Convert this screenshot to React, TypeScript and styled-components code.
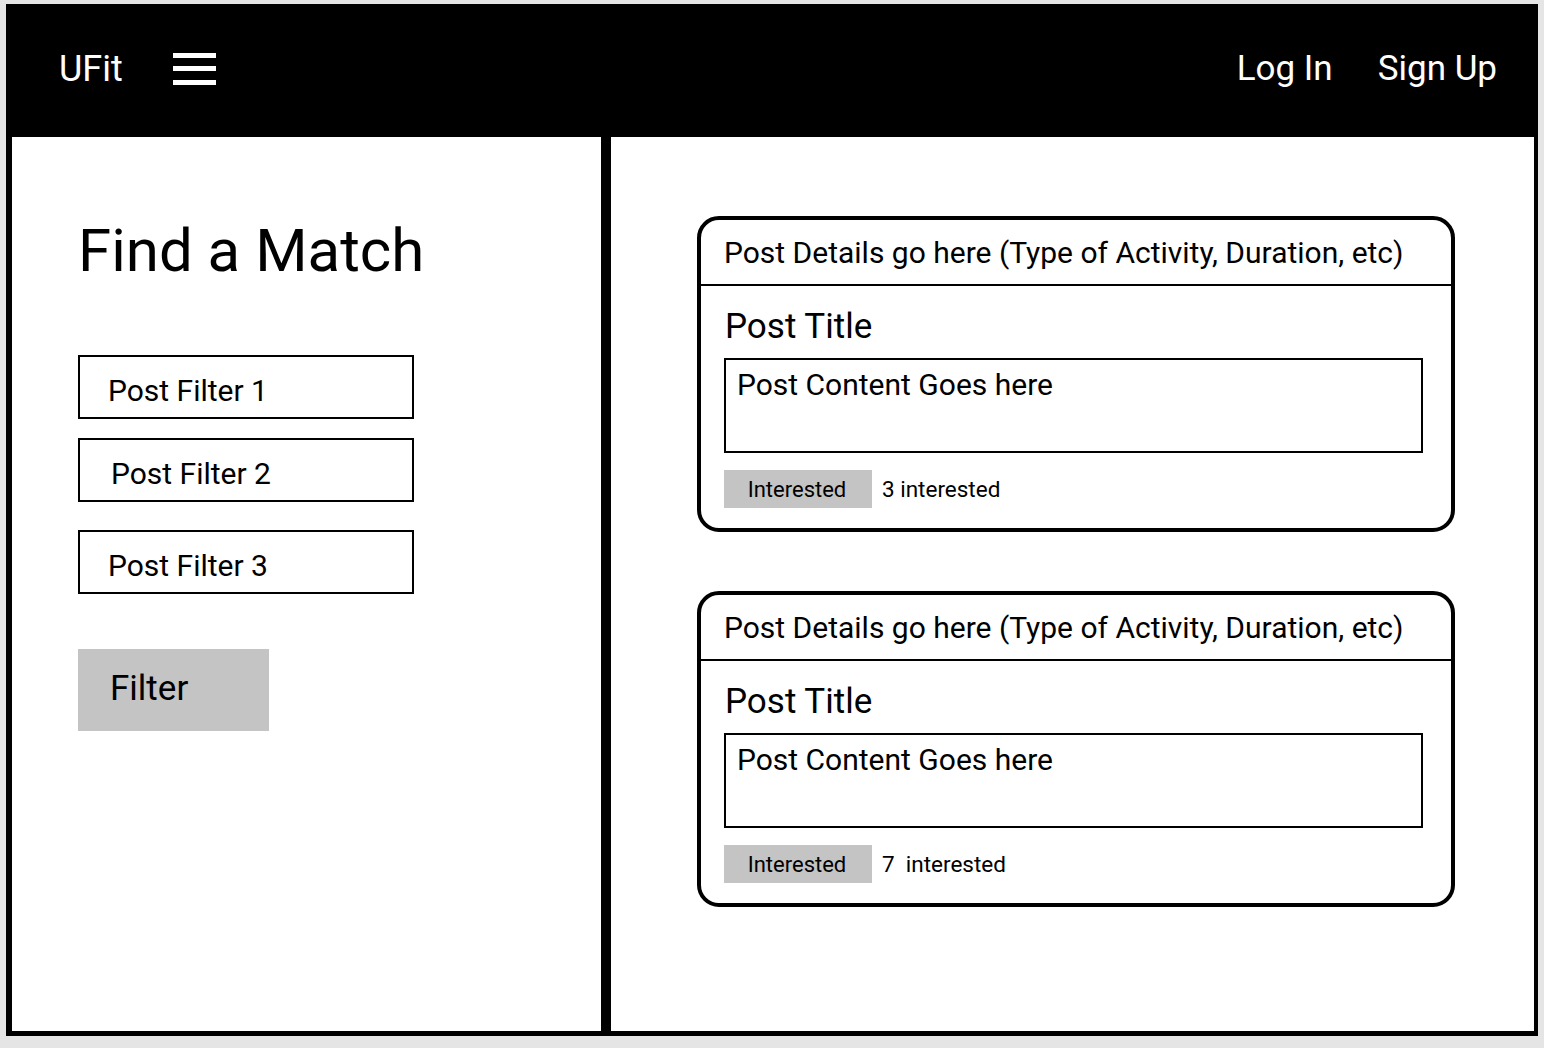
import React from "react";
import styled, { createGlobalStyle } from "styled-components";

const Global = createGlobalStyle`
  html, body { margin: 0; padding: 0; background: #e5e5e5; }
  body { font-family: Roboto, "Liberation Sans", sans-serif; color: #000; }
  * { box-sizing: border-box; }
`;

const Frame = styled.div`
  margin: 4px 0 0 6px;
  width: 1532px;
  height: 1032px;
  background: #000;
  padding: 0 4px 5px 6px;
  display: flex;
  flex-direction: column;
`;

const Header = styled.header`
  height: 133px;
  display: flex;
  align-items: center;
  padding: 0 37px 4px 47px;
  color: #fff;
`;

const Brand = styled.div`
  font-size: 36px;
  font-weight: 400;
`;

const Burger = styled.button`
  margin-left: 50px;
  width: 43px;
  height: 32px;
  padding: 0;
  border: 0;
  background: transparent;
  display: flex;
  flex-direction: column;
  justify-content: space-between;
  cursor: pointer;
  span {
    display: block;
    height: 5px;
    background: #fff;
  }
`;

const Spacer = styled.div`
  flex: 1;
`;

const NavLink = styled.a<{ $gap?: number }>`
  font-size: 35px;
  color: #fff;
  text-decoration: none;
  margin-left: ${(p) => p.$gap ?? 0}px;
`;

const Body = styled.div`
  flex: 1;
  display: flex;
  gap: 10px;
`;

const Sidebar = styled.aside`
  width: 589px;
  background: #fff;
  padding: 78px 0 0 66px;
`;

const Title = styled.h1`
  margin: 0 0 68px;
  font-size: 60px;
  font-weight: 400;
  line-height: 72px;
`;

const FilterBox = styled.div<{ $mt: number; $pl: number }>`
  width: 336px;
  height: 64px;
  border: 2px solid #000;
  margin-top: ${(p) => p.$mt}px;
  padding-left: ${(p) => p.$pl}px;
  display: flex;
  align-items: center;
  padding-top: 6px;
  font-size: 30px;
`;

const FilterButton = styled.button`
  margin-top: 55px;
  width: 191px;
  height: 82px;
  border: 0;
  background: #c4c4c4;
  font-family: inherit;
  font-size: 35px;
  text-align: left;
  padding: 0 0 4px 32px;
  color: #000;
`;

const Feed = styled.main`
  flex: 1;
  background: #fff;
  padding: 79px 0 0 86px;
  display: flex;
  flex-direction: column;
  gap: 59px;
`;

const Card = styled.article`
  width: 758px;
  height: 316px;
  border: 4px solid #000;
  border-radius: 22px;
  display: flex;
  flex-direction: column;
`;

const CardHead = styled.div`
  height: 66px;
  border-bottom: 2px solid #000;
  padding: 0 0 0 23px;
  display: flex;
  align-items: center;
  font-size: 30px;
`;

const CardBody = styled.div`
  padding: 20px 28px 0 23px;
`;

const PostTitle = styled.h2`
  margin: 0 0 10px 1px;
  font-size: 35px;
  font-weight: 400;
  line-height: 42px;
`;

const ContentBox = styled.div`
  height: 95px;
  border: 2px solid #000;
  padding: 7px 0 0 11px;
  font-size: 30px;
  line-height: 36px;
`;

const Actions = styled.div`
  margin-top: 17px;
  display: flex;
  align-items: center;
  gap: 10px;
`;

const InterestButton = styled.button`
  width: 148px;
  height: 38px;
  border: 0;
  background: #c4c4c4;
  font-family: inherit;
  font-size: 22px;
  color: #000;
  padding: 0 2px 0 0;
`;

const Count = styled.span`
  font-size: 22.5px;
  white-space: pre;
`;

const posts = [{ count: "3 interested" }, { count: "7  interested" }];

export default function App() {
  return (
    <>
      <Global />
      <Frame>
        <Header>
          <Brand>UFit</Brand>
          <Burger aria-label="menu">
            <span />
            <span />
            <span />
          </Burger>
          <Spacer />
          <NavLink href="#">Log In</NavLink>
          <NavLink href="#" $gap={45}>Sign Up</NavLink>
        </Header>
        <Body>
          <Sidebar>
            <Title>Find a Match</Title>
            <FilterBox $mt={0} $pl={28}>Post Filter 1</FilterBox>
            <FilterBox $mt={19} $pl={31}>Post Filter 2</FilterBox>
            <FilterBox $mt={28} $pl={28}>Post Filter 3</FilterBox>
            <FilterButton>Filter</FilterButton>
          </Sidebar>
          <Feed>
            {posts.map((p, i) => (
              <Card key={i}>
                <CardHead>Post Details go here (Type of Activity, Duration, etc)</CardHead>
                <CardBody>
                  <PostTitle>Post Title</PostTitle>
                  <ContentBox>Post Content Goes here</ContentBox>
                  <Actions>
                    <InterestButton>Interested</InterestButton>
                    <Count>{p.count}</Count>
                  </Actions>
                </CardBody>
              </Card>
            ))}
          </Feed>
        </Body>
      </Frame>
    </>
  );
}
